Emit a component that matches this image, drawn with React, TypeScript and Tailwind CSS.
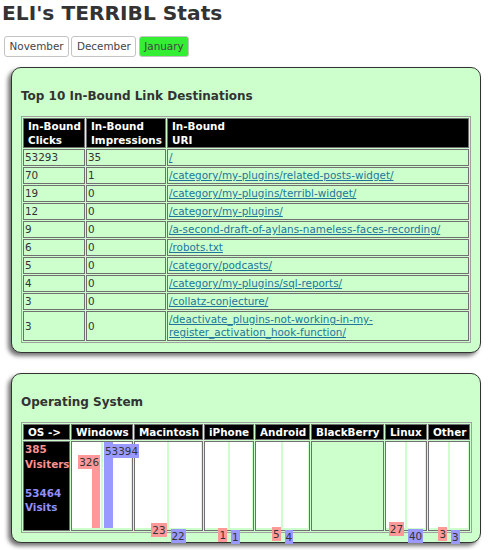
import React from "react";

const links: [string, string, string][] = [
  ["53293", "35", "/"],
  ["70", "1", "/category/my-plugins/related-posts-widget/"],
  ["19", "0", "/category/my-plugins/terribl-widget/"],
  ["12", "0", "/category/my-plugins/"],
  ["9", "0", "/a-second-draft-of-aylans-nameless-faces-recording/"],
  ["6", "0", "/robots.txt"],
  ["5", "0", "/category/podcasts/"],
  ["4", "0", "/category/my-plugins/sql-reports/"],
  ["3", "0", "/collatz-conjecture/"],
  ["3", "0", "/deactivate_plugins-not-working-in-my-register_activation_hook-function/"],
];

type OS = { name: string; w: string; a: number | null; b: number | null };
const oses: OS[] = [
  { name: "Windows", w: "w-[62px]", a: 326, b: 53394 },
  { name: "Macintosh", w: "w-[69px]", a: 23, b: 22 },
  { name: "iPhone", w: "w-[50px]", a: 1, b: 1 },
  { name: "Android", w: "w-[55px]", a: 5, b: 4 },
  { name: "BlackBerry", w: "w-[73px]", a: null, b: null },
  { name: "Linux", w: "w-[42px]", a: 27, b: 40 },
  { name: "Other", w: "w-[42px]", a: 3, b: 3 },
];

const TOTAL_VISITERS = 385;
const TOTAL_VISITS = 53464;

const th =
  "border border-[#707070] bg-black text-white font-bold text-left px-[4px] py-[0.5px] leading-[13px] whitespace-nowrap";
const th2 =
  "border border-[#707070] bg-black text-white font-bold text-left px-[4px] py-0 leading-[14px] whitespace-nowrap";
const td = "border border-[#707070] px-[1px] py-[1px] leading-[13px] align-middle text-[#333]";

function RedBar({ value }: { value: number }) {
  return (
    <div
      className="absolute bottom-0 right-[0.5px] w-[8.5px] bg-[#ff9999]"
      style={{ height: `${(value / TOTAL_VISITERS) * 100}%` }}
    >
      <span className="absolute top-0 right-0 z-10 whitespace-nowrap bg-[#ff9999] px-[1px] leading-[14px] text-[#333]">
        {value}
      </span>
    </div>
  );
}

function BlueBar({ value }: { value: number }) {
  return (
    <div
      className="absolute bottom-0 left-[1.5px] w-[8.5px] bg-[#9999ff]"
      style={{ height: `${(value / TOTAL_VISITS) * 100}%` }}
    >
      <span className="absolute top-[1.5px] left-0 z-10 whitespace-nowrap bg-[#9999ff] px-[1px] leading-[14px] text-[#333]">
        {value}
      </span>
    </div>
  );
}

function Card({ title, children, className }: { title: string; children: React.ReactNode; className: string }) {
  return (
    <div
      className={
        "ml-[11px] mr-[8px] rounded-[10px] border border-[#333] bg-[#ccffcc] px-[9px] pt-[21px] pb-[9px] shadow-[-3px_3px_4px_rgba(0,0,0,0.55)] " +
        className
      }
    >
      <h2 className="mb-[13px] text-[12px] font-bold leading-[14px] text-[#333]">{title}</h2>
      {children}
    </div>
  );
}

export default function App() {
  return (
    <div className="min-h-[550px] bg-white font-['DejaVu_Sans',sans-serif] text-[#333]">
      <h1 className="pl-[2px] pt-[1px] text-[20.2px] font-bold leading-[24px] text-[#333]">ELI's TERRIBL Stats</h1>
      <div className="mt-[11px] flex gap-[2.4px] pl-[4px] text-[10.4px]">
        <button className="rounded-[3px] border border-[#c4c4c4] bg-white px-[4.5px] py-[3px] leading-[13px] text-[#444]">
          November
        </button>
        <button className="rounded-[3px] border border-[#c4c4c4] bg-white px-[4.5px] py-[3px] leading-[13px] text-[#444]">
          December
        </button>
        <button className="rounded-[3px] border border-[#c4c4c4] bg-[#33ee33] px-[4.5px] py-[3px] leading-[13px] text-[#444]">
          January
        </button>
      </div>

      <Card title="Top 10 In-Bound Link Destinations" className="mt-[10px]">
        <table className="w-full table-fixed border-separate border-spacing-[1px] border border-[#a0a0a0] text-[10.4px]">
          <thead>
            <tr>
              <th className={th2 + " w-[62px]"}>
                In-Bound
                <br />
                Clicks
              </th>
              <th className={th2 + " w-[80px]"}>
                In-Bound
                <br />
                Impressions
              </th>
              <th className={th2}>
                In-Bound
                <br />
                URI
              </th>
            </tr>
          </thead>
          <tbody>
            {links.map((r, i) => (
              <tr key={i}>
                <td className={td}>{r[0]}</td>
                <td className={td}>{r[1]}</td>
                <td className={td}>
                  <a href="#" className="text-[#21759b] underline">
                    {r[2]}
                  </a>
                </td>
              </tr>
            ))}
          </tbody>
        </table>
      </Card>

      <Card title="Operating System" className="mt-[20px]">
        <table className="w-full table-fixed border-separate border-spacing-[1px] border border-[#a0a0a0] text-[10.4px]">
          <thead>
            <tr>
              <th className={th + " w-[47px]"}>OS -&gt;</th>
              {oses.map((o) => (
                <th key={o.name} className={th + " " + o.w}>
                  {o.name}
                </th>
              ))}
            </tr>
          </thead>
          <tbody>
            <tr>
              <td className="border border-[#707070] bg-black px-[1px] align-top font-bold leading-[14.5px]">
                <div className="text-[#ff9090]">385</div>
                <div className="text-[#ff9090]">Visiters</div>
                <div className="h-[14.5px]" />
                <div className="text-[#9090ff]">53464</div>
                <div className="text-[#9090ff]">Visits</div>
              </td>
              {oses.map((o) => (
                <td key={o.name} className="border border-[#707070] p-0 pb-[2px] align-top">
                  {o.a !== null && o.b !== null ? (
                    <div className="flex h-[86px] gap-[2px] pr-[1px]">
                      <div className="relative flex-1 bg-white">
                        <RedBar value={o.a} />
                      </div>
                      <div className="relative flex-1 bg-white">
                        <BlueBar value={o.b} />
                      </div>
                    </div>
                  ) : (
                    <div className="h-[86px]" />
                  )}
                </td>
              ))}
            </tr>
          </tbody>
        </table>
      </Card>
    </div>
  );
}
